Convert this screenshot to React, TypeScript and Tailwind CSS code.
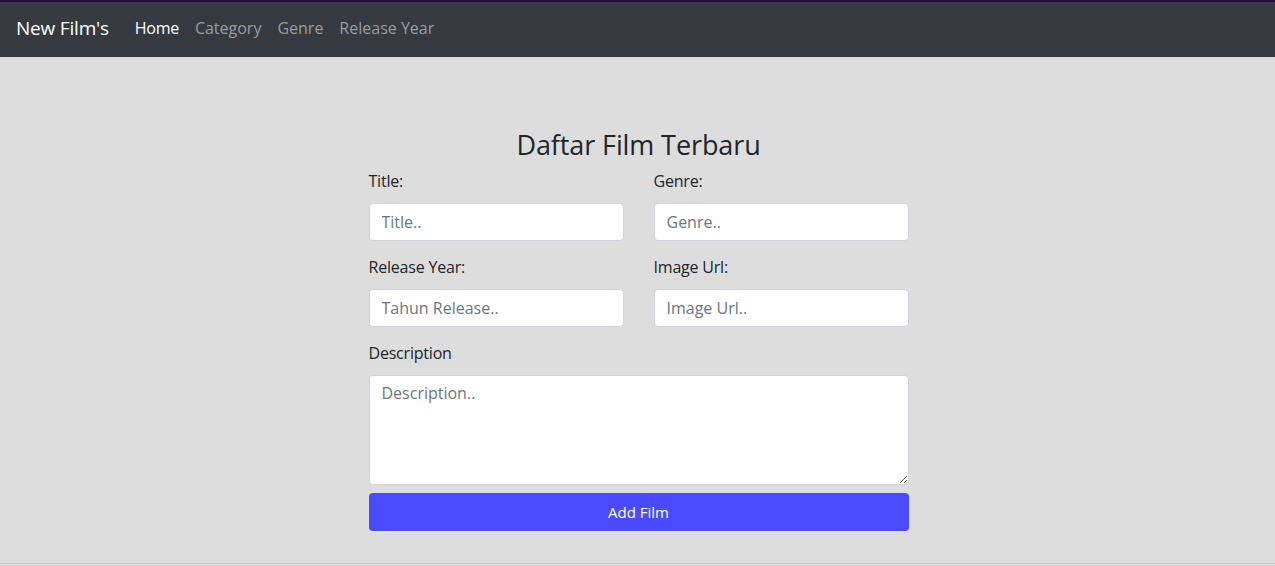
import React from "react";

const font = { fontFamily: "'Open Sans', 'Noto Sans', sans-serif" };

const inputCls =
  "w-full h-[38px] bg-white border border-[#ced4da] rounded-[4px] px-3 text-[16px] text-[#495057] placeholder-[#6c757d] outline-none";

export default function App() {
  return (
    <div className="min-h-[566px] bg-[#dddddd] flex flex-col text-[#212529]" style={font}>
      <nav className="h-[57px] bg-[#343a40] border-t-2 border-[#25093f] flex items-center px-4 pb-[3px]">
        <span className="text-white text-[19px] mr-[18px] tracking-[-0.2px]">New Film's</span>
        <div className="flex items-center">
          <a className="px-2 text-white text-[16px] tracking-[-0.3px]">Home</a>
          <a className="px-2 text-[#9a9da0] text-[16px]">Category</a>
          <a className="px-2 text-[#9a9da0] text-[16px]">Genre</a>
          <a className="px-2 text-[#9a9da0] text-[16px]">Release Year</a>
        </div>
      </nav>
      <main className="flex-1 flex justify-center pl-[2px]">
        <div className="w-[540px] pt-[71px]">
          <h1 className="text-center text-[27px] leading-[34px] tracking-[-0.1px]">Daftar Film Terbaru</h1>
          <div className="grid grid-cols-2 gap-x-[30px] mt-[7px]">
            <div>
              <label className="block text-[16px] leading-[24px] mb-[10px] tracking-[-0.2px]">Title:</label>
              <input className={inputCls} placeholder="Title.." />
            </div>
            <div>
              <label className="block text-[16px] leading-[24px] mb-[10px] tracking-[-0.2px]">Genre:</label>
              <input className={inputCls} placeholder="Genre.." />
            </div>
            <div className="mt-[14px]">
              <label className="block text-[16px] leading-[24px] mb-[10px] tracking-[-0.2px]">Release Year:</label>
              <input className={inputCls} placeholder="Tahun Release.." />
            </div>
            <div className="mt-[14px]">
              <label className="block text-[16px] leading-[24px] mb-[10px] tracking-[-0.2px]">Image Url:</label>
              <input className={inputCls} placeholder="Image Url.." />
            </div>
          </div>
          <label className="block text-[16px] leading-[24px] mt-[14px] mb-[10px] tracking-[-0.2px]">Description</label>
          <textarea
            className="block w-full h-[110px] bg-white border border-[#ced4da] rounded-[4px] px-3 py-[5px] text-[16px] placeholder-[#6c757d] outline-none"
            placeholder="Description.."
          />
          <button className="block w-full h-[38px] mt-[8px] bg-[#4a4aff] text-white text-[15px] rounded-[4px]">
            Add Film
          </button>
        </div>
      </main>
      <footer className="h-[3px] border-t border-[#c8c8c8] bg-[#dddddd]" />
    </div>
  );
}
